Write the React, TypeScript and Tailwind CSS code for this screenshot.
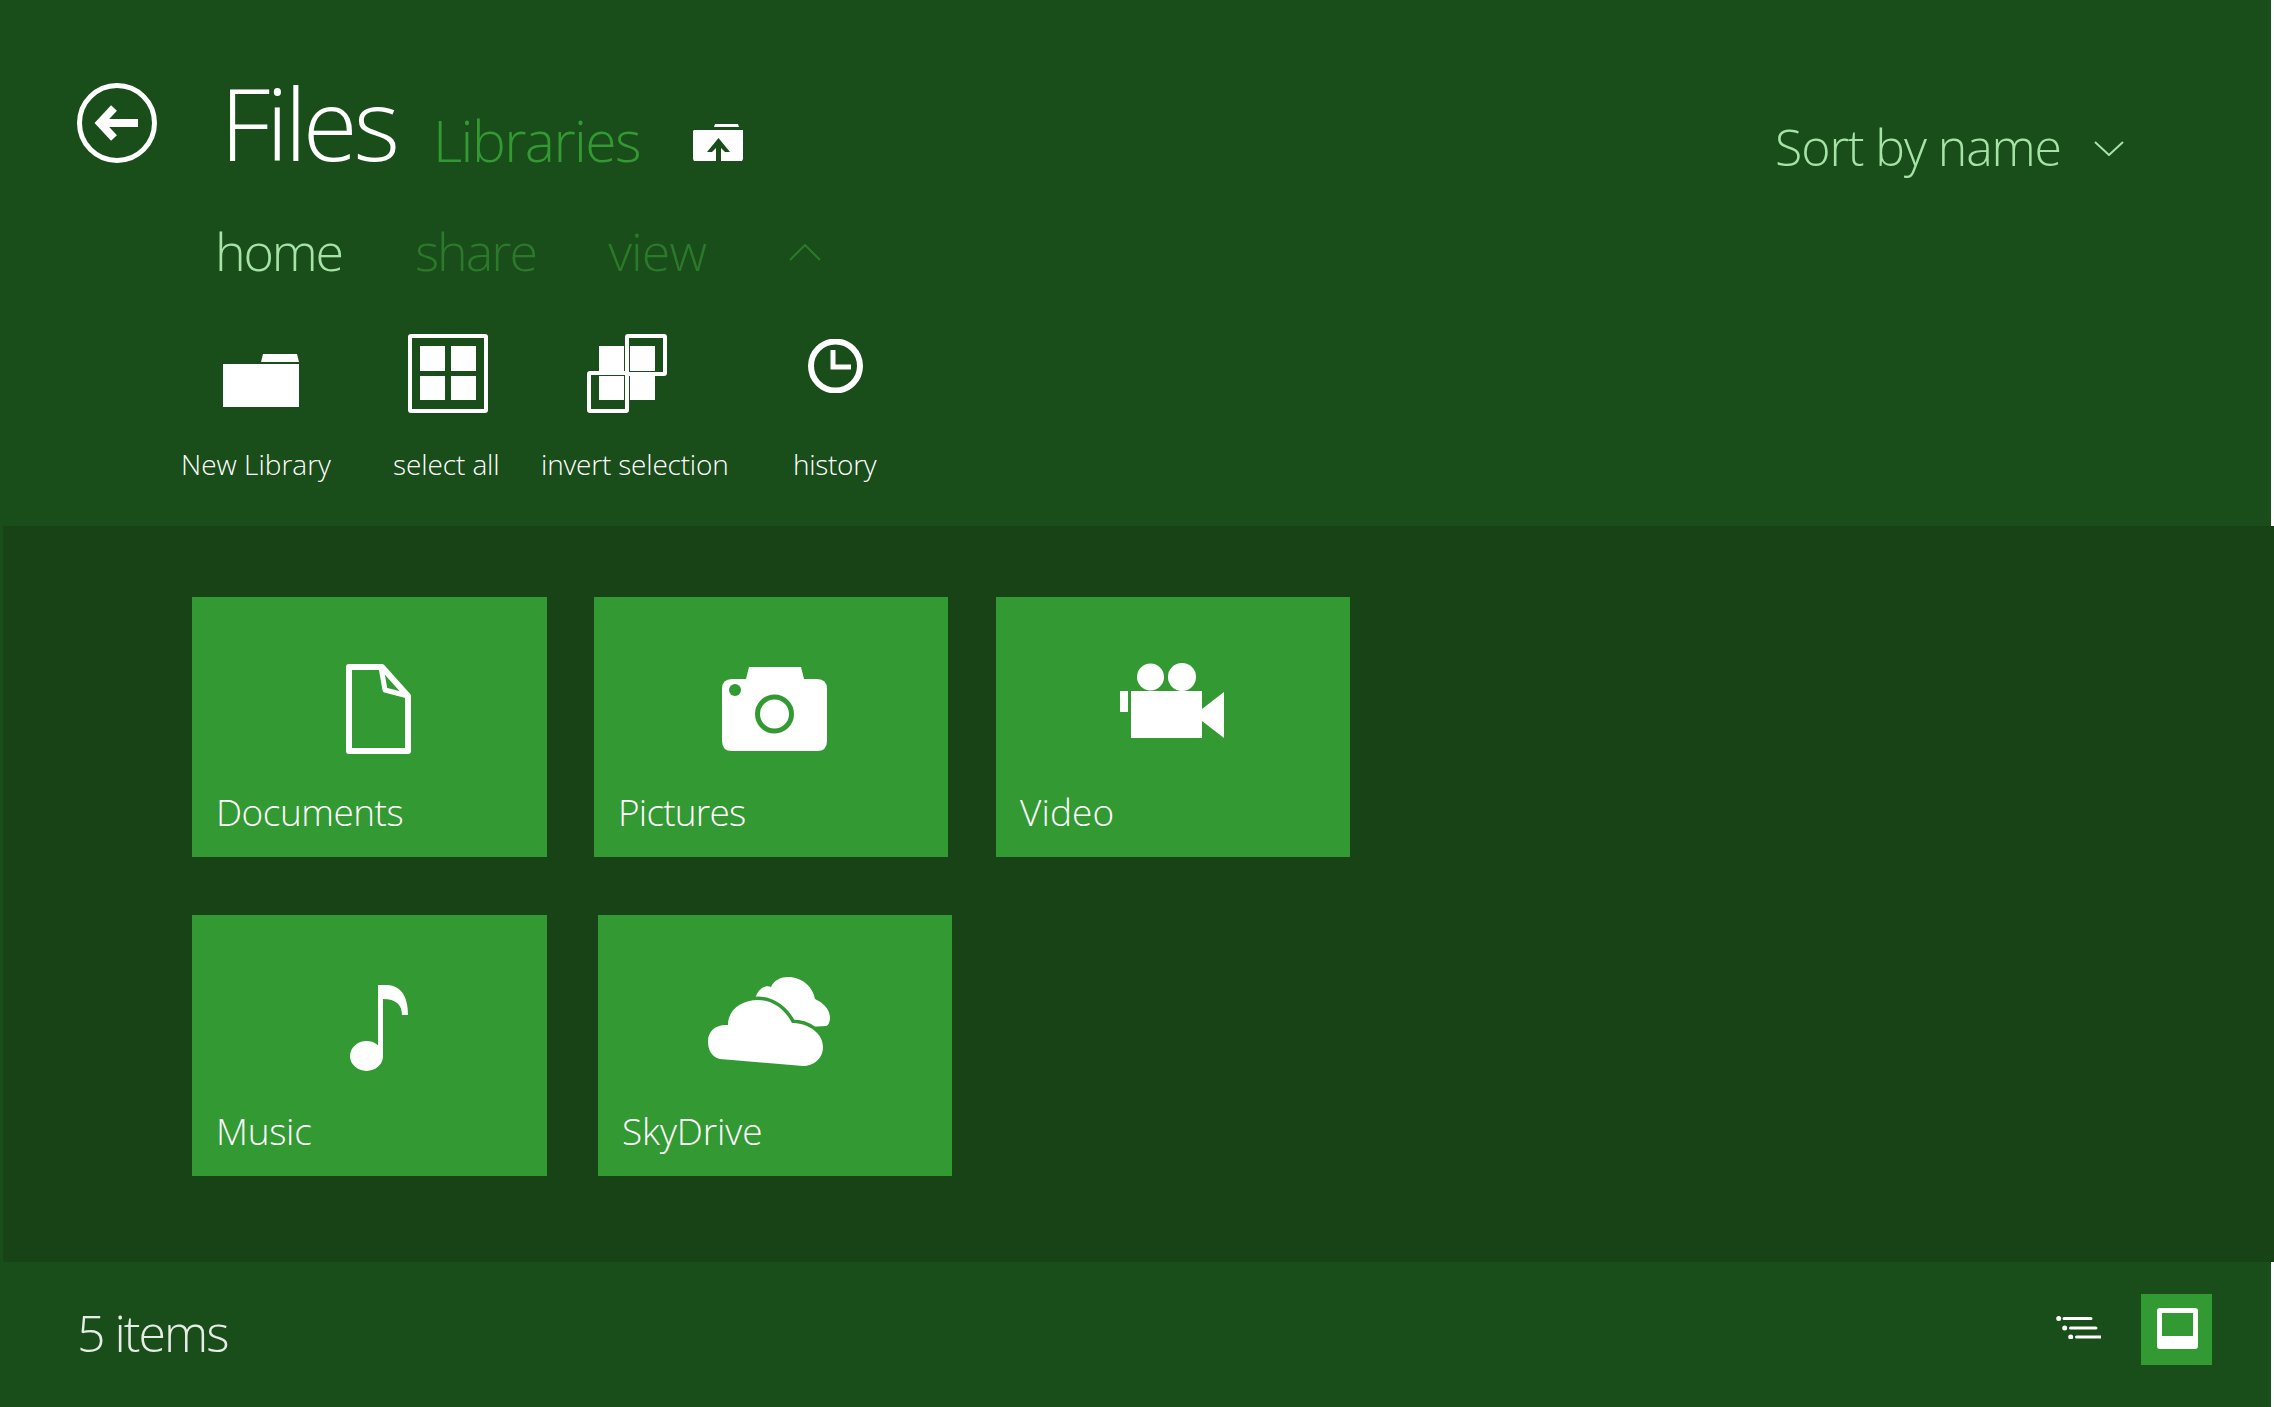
import { ReactNode } from "react";

const BackIcon = () => (
  <svg width="80" height="80" viewBox="0 0 80 80" className="ml-[77px] mt-[83px] shrink-0">
    <circle cx="40" cy="40" r="37.5" fill="none" stroke="#fff" strokeWidth="5" />
    <path d="M61 40H27" stroke="#fff" strokeWidth="8" fill="none" />
    <path d="M37 25L23 40L37 55" stroke="#fff" strokeWidth="8" fill="none" />
  </svg>
);

const UpFolderIcon = () => (
  <svg width="51" height="38" viewBox="0 0 51 38" className="ml-[53px] mt-[123px] shrink-0">
    <path d="M21 4L22 1H45L46 4Z" fill="#fff" />
    <path d="M1 7H50V36L49 38H1L0 36V8Z" fill="#fff" />
    <path d="M25.5 15L37 29H32L28 25V38H23V25L19 29H14Z" fill="#194d19" />
  </svg>
);

const Tile = ({ label, iconClass, tileClass, labelClass, children }: { label: string; iconClass: string; tileClass: string; labelClass: string; children: ReactNode }) => (
  <div className={`flex flex-col bg-[#339933] ${tileClass}`}>
    <div className={iconClass}>{children}</div>
    <div className={`mt-auto pb-[27px] pl-[24px] text-[37px] leading-[37px] font-light text-white ${labelClass}`}>{label}</div>
  </div>
);

export default function App() {
  return (
    <div className="w-[2274px] h-[1407px] overflow-hidden bg-white font-['Open_Sans',sans-serif]">
      <header className="h-[526px] mr-[3px] bg-[#194d19]">
        <div className="flex h-[190px]">
          <BackIcon />
          <div className="ml-[63px] mt-[72px] text-[100px] leading-[100px] font-light tracking-[-4.2px] text-white">Files</div>
          <div className="ml-[37px] mt-[112px] text-[57px] leading-[57px] font-light tracking-[-1.6px] text-[#339933]">Libraries</div>
          <UpFolderIcon />
          <div className="ml-auto mt-[122px] flex items-start text-[50px] leading-[50px] font-light tracking-[-1.1px] text-[#a6e3a6]">
            <span>Sort by name</span>
            <svg width="30" height="15" viewBox="0 0 30 15" className="ml-[33px] mr-[147px] mt-[19px]">
              <path d="M1 1L15 14L29 1" fill="none" stroke="#a6e3a6" strokeWidth="2" />
            </svg>
          </div>
        </div>

        <div className="flex items-start pt-[35px] pl-[215px] text-[52px] leading-[52px] font-light">
          <span className="tracking-[-2.2px] text-[#a6e3a6]">home</span>
          <span className="ml-[73px] tracking-[-2px] text-[#2b7a2b]">share</span>
          <span className="ml-[72px] tracking-[-1px] text-[#2b7a2b]">view</span>
          <svg width="32" height="17" viewBox="0 0 32 17" className="ml-[83px] mt-[19px]">
            <path d="M1 16L16 1L31 16" fill="none" stroke="#2b7a2b" strokeWidth="2" />
          </svg>
        </div>

        <div className="flex mt-[57px] pl-[181px] text-[28px] leading-[28px] font-light text-white">
          <div className="flex flex-col w-[212px]">
            <svg width="76" height="53" viewBox="0 0 76 53" className="ml-[42px] mt-[20px]">
              <path d="M38 8L40 0H74L76 8Z" fill="#fff" />
              <rect x="0" y="10" width="76" height="43" fill="#fff" />
            </svg>
            <span className="mt-[43px]">New Library</span>
          </div>
          <div className="flex flex-col w-[148px]">
            <svg width="80" height="79" viewBox="0 0 80 79" className="ml-[15px]">
              <rect x="2" y="2" width="76" height="75" rx="1" fill="none" stroke="#fff" strokeWidth="4" />
              <path d="M12 12H37V37H12ZM43 12H68V37H43ZM12 42H37V66H12ZM43 42H68V66H43Z" fill="#fff" />
            </svg>
            <span className="mt-[37px] tracking-[-0.1px]">select all</span>
          </div>
          <div className="flex flex-col w-[252px]">
            <svg width="80" height="79" viewBox="0 0 80 79" className="ml-[46px]">
              <path d="M12 12H37V37H12ZM43 12H68V37H43ZM12 42H37V66H12ZM43 42H68V66H43Z" fill="#fff" />
              <rect x="40" y="2" width="38" height="38" rx="1" fill="none" stroke="#fff" strokeWidth="4" />
              <rect x="2" y="39" width="38" height="38" rx="1" fill="none" stroke="#fff" strokeWidth="4" />
            </svg>
            <span className="mt-[37px] tracking-[-0.2px]">invert selection</span>
          </div>
          <div className="flex flex-col">
            <svg width="55" height="54" viewBox="0 0 55 54" className="ml-[15px] mt-[5px]">
              <circle cx="27.5" cy="27" r="24.5" fill="none" stroke="#fff" strokeWidth="6" />
              <path d="M25 11V28H43" fill="none" stroke="#fff" strokeWidth="5" />
            </svg>
            <span className="mt-[57px] tracking-[-0.3px]">history</span>
          </div>
        </div>
      </header>

      <main className="h-[736px] pl-[3px] bg-[#194d19]">
        <div className="h-full pt-[71px] pl-[189px] bg-[#174317]">
          <div className="flex">
            <Tile label="Documents" labelClass="tracking-[-0.5px]" tileClass="w-[355px] h-[260px]" iconClass="ml-[154px] mt-[67px]">
              <svg width="65" height="90" viewBox="0 0 65 90" className="block">
                <path d="M3 3H36L62 32V87H3Z" fill="none" stroke="#fff" strokeWidth="6" strokeLinejoin="round" />
                <path d="M35 3L39 26L62 32" fill="none" stroke="#fff" strokeWidth="5" strokeLinejoin="round" />
              </svg>
            </Tile>
            <Tile label="Pictures" labelClass="tracking-[-0.8px]" tileClass="w-[354px] h-[260px] ml-[47px]" iconClass="ml-[128px] mt-[70px]">
              <svg width="105" height="84" viewBox="0 0 105 84" className="block">
                <path d="M27 0H79L82 12H95Q105 12 105 22V74Q105 84 95 84H10Q0 84 0 74V22Q0 12 10 12H24Z" fill="#fff" />
                <ellipse cx="13" cy="23" rx="6" ry="6" fill="#339933" />
                <circle cx="52.5" cy="47" r="17" fill="#fff" stroke="#339933" strokeWidth="5" />
              </svg>
            </Tile>
            <Tile label="Video" labelClass="tracking-[0.1px]" tileClass="w-[354px] h-[260px] ml-[48px]" iconClass="ml-[124px] mt-[66px]">
              <svg width="104" height="76" viewBox="0 0 104 76" className="block">
                <circle cx="30.5" cy="14" r="13.5" fill="#fff" />
                <circle cx="62" cy="14" r="14" fill="#fff" />
                <rect x="11" y="28" width="71" height="47" fill="#fff" />
                <rect x="0" y="28" width="8" height="21" fill="#fff" />
                <path d="M82 46L104 29V75L82 58Z" fill="#fff" />
              </svg>
            </Tile>
          </div>
          <div className="flex mt-[58px]">
            <Tile label="Music" labelClass="tracking-[-0.3px]" tileClass="w-[355px] h-[261px]" iconClass="ml-[158px] mt-[70px]">
              <svg width="58" height="86" viewBox="0 0 58 86" className="block">
                <ellipse cx="16.5" cy="71" rx="16.5" ry="15" fill="#fff" />
                <path d="M28 0H36C50 0 58 10 58 30H52C52 20 46 14 33 14V72H28Z" fill="#fff" />
              </svg>
            </Tile>
            <Tile label="SkyDrive" labelClass="tracking-[-0.1px]" tileClass="w-[354px] h-[261px] ml-[51px]" iconClass="ml-[110px] mt-[62px]">
              <svg width="122" height="89" viewBox="0 0 122 89" className="block">
                <path d="M47 24C48 12 58 7 63 10C66 3 73 0 80 0C94 0 105 10 107 22C116 26 122 33 122 41C122 45 120 49 118 49L100 50Z" fill="#fff" />
                <path d="M12 82C3 80 0 72 0 64C0 54 8 47 20 48C20 32 34 23 50 23C66 23 78 34 84 46C100 46 115 56 115 70C115 82 105 89 95 89Z" fill="#fff" stroke="#339933" strokeWidth="7" paintOrder="stroke" />
              </svg>
            </Tile>
          </div>
        </div>
      </main>

      <footer className="flex h-[145px] mr-[3px] bg-[#194d19]">
        <div className="ml-[77px] mt-[46px] text-[50px] leading-[50px] font-light tracking-[-2px] text-[#e6ede6]">5 items</div>
        <svg width="45" height="23" viewBox="0 0 45 23" className="ml-auto mt-[54px]">
          <path d="M8 2.5H35M14.5 12H40M20.5 21H45" stroke="#fff" strokeWidth="3" strokeLinecap="round" fill="none" />
          <circle cx="2.7" cy="2.5" r="2.5" fill="#fff" />
          <circle cx="8.7" cy="12" r="2.5" fill="#fff" />
          <circle cx="14.7" cy="21" r="2.5" fill="#fff" />
        </svg>
        <div className="flex items-center justify-center w-[71px] h-[71px] ml-[40px] mr-[59px] mt-[32px] bg-[#339933]">
          <svg width="41" height="41" viewBox="0 0 41 41" className="ml-[2px] mt-[-2px]">
            <path fillRule="evenodd" d="M3 0H38Q41 0 41 3V38Q41 41 38 41H3Q0 41 0 38V3Q0 0 3 0ZM5 5V28H36V5Z" fill="#fff" />
          </svg>
        </div>
      </footer>
    </div>
  );
}
